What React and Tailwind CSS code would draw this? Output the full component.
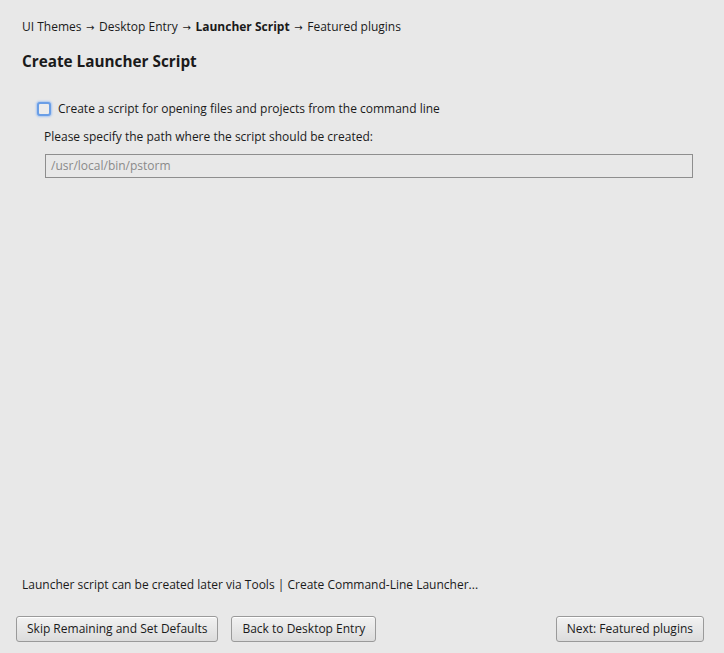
const Arrow = () => <span className="px-[1.5px] font-['DejaVu_Sans',sans-serif] text-[10px] leading-none">→</span>

export default function App() {
  const btn =
    'h-[26px] rounded-[3px] border border-[#9a9a9a] bg-gradient-to-b from-[#f2f2f2] to-[#dcdcdc] px-[10px] text-[12px] text-[#1a1a1a] shadow-[inset_0_1px_0_#fff]'
  return (
    <div className="flex h-[653px] w-[724px] flex-col bg-[#e8e8e8] text-[#1a1a1a] font-['Open_Sans',sans-serif] text-[12px]">
      {/* breadcrumbs */}
      <div className="h-[36px] pl-[22px] pt-[18px] leading-[18px]">
        UI Themes <Arrow /> Desktop Entry <Arrow /> <span className="font-bold">Launcher Script</span> <Arrow /> Featured plugins
      </div>
      <h1 className="pl-[22px] pt-[15px] text-[15.3px] font-bold leading-[20px]">Create Launcher Script</h1>

      <div className="pl-[37px] pt-[29px] pr-[31px]">
        <label className="flex items-center gap-[7px]">
          <span className="h-[14px] w-[14px] rounded-[3px] border-2 border-[#6a9ee6] bg-[#ececec] shadow-[0_0_2px_1px_#a9c6f0]" />
          <span className="leading-[18px]">Create a script for opening files and projects from the command line</span>
        </label>
        <div className="pl-[7px] pt-[10px] leading-[18px]">Please specify the path where the script should be created:</div>
        <div className="ml-[8px] mt-[8px] flex h-[24px] items-center border border-[#8e8e8e] px-[5px] text-[#8a8a8a]">
          /usr/local/bin/pstorm
        </div>
      </div>

      <div className="flex-1" />

      <div className="pl-[22px] pb-[22px] leading-[18px]">
        Launcher script can be created later via Tools | Create Command-Line Launcher...
      </div>
      <div className="flex items-center px-[16px] pb-[11px]">
        <button className={btn}>Skip Remaining and Set Defaults</button>
        <button className={`${btn} ml-[13px]`}>Back to Desktop Entry</button>
        <div className="flex-1" />
        <button className={`${btn} mr-[4px]`}>Next: Featured plugins</button>
      </div>
    </div>
  )
}
